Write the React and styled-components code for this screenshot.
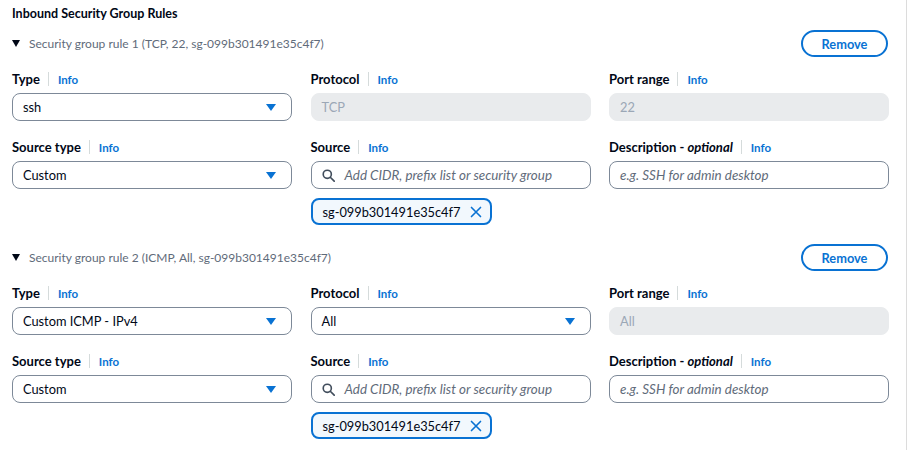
import React from "react";
import styled, { createGlobalStyle } from "styled-components";

const Global = createGlobalStyle`
  html, body { margin: 0; padding: 0; background: #fff; }
  body { font-family: Lato, "Open Sans", sans-serif; color: #000716; }
  * { box-sizing: border-box; }
`;

const Page = styled.div`
  width: 910px;
  height: 450px;
  overflow: hidden;
  display: flex;
`;

const Content = styled.div`
  flex: 1;
  padding: 4px 0 0 12px;
  width: 906px;
`;

const Edge = styled.div`
  width: 1px;
  background: #dcdcdc;
  margin-right: 3px;
`;

const Title = styled.h2`
  margin: 0;
  font-size: 12.5px;
  font-weight: 700;
  line-height: 20px;
  height: 20px;
`;

const Rule = styled.section`
  width: 877px;
  padding-top: ${(p) => p.$top}px;
`;

const RuleHeader = styled.div`
  display: flex;
  align-items: center;
  justify-content: space-between;
  height: 27px;
`;

const Toggle = styled.div`
  display: flex;
  align-items: center;
  gap: 9px;
  font-size: 12px;
  color: #5f6b7a;
`;

const Caret = styled.span`
  width: 0;
  height: 0;
  border-left: 4.5px solid transparent;
  border-right: 4.5px solid transparent;
  border-top: 7px solid #000716;
`;

const RemoveButton = styled.button`
  width: 87px;
  height: 27px;
  border: 2px solid #0972d3;
  border-radius: 14px;
  background: #fff;
  color: #0972d3;
  font-family: inherit;
  font-weight: 700;
  font-size: 12.8px;
  padding: 0;
  margin-right: 1px;
`;

const Grid = styled.div`
  display: grid;
  grid-template-columns: 280px 280px 280px;
  column-gap: 18.5px;
  row-gap: 16px;
  margin-top: 12px;
`;

const Field = styled.div`
  display: flex;
  flex-direction: column;
  gap: 4px;
`;

const LabelRow = styled.div`
  display: flex;
  align-items: center;
  height: 20px;
  font-size: 13px;
  font-weight: 700;
`;

const Optional = styled.i`
  font-weight: 700;
`;

const Sep = styled.span`
  width: 1px;
  height: 14px;
  background: #d5dbdb;
  margin: 0 9px 0 8px;
`;

const Info = styled.span`
  color: #0972d3;
  font-size: 11.5px;
  font-weight: 700;
`;

const Box = styled.div`
  height: 28px;
  border-radius: 8px;
  display: flex;
  align-items: center;
  font-size: 12.8px;
  padding: 0 10px;
  ${(p) =>
    p.$disabled
      ? `background: #e9ebed; color: #9ba7b6; border: 1px solid #e9ebed;`
      : `background: #fff; border: 1px solid #7d8998; color: #000716;`}
`;

const BoxText = styled.span`
  flex: 1;
  ${(p) => p.$placeholder && `color: #5f6b7a; font-style: italic; font-size: 13.4px;`}
`;

const Arrow = styled.span`
  width: 0;
  height: 0;
  border-left: 5px solid transparent;
  border-right: 5px solid transparent;
  border-top: 7px solid #0972d3;
  margin-right: 5px;
`;

const SearchIcon = styled.svg`
  width: 13px;
  height: 13px;
  margin-right: 10px;
  flex: none;
`;

const Token = styled.div`
  display: inline-flex;
  align-items: center;
  gap: 8px;
  height: 27px;
  width: 181px;
  margin-top: 5px;
  padding: 0 8px 0 10px;
  border: 2px solid #0972d3;
  border-radius: 8px;
  background: #f2f8fd;
  font-size: 12.8px;
  color: #000716;
`;

const Close = styled.svg`
  width: 12px;
  height: 12px;
  flex: none;
`;

const Label = ({ children }) => (
  <LabelRow>
    {children}
    <Sep />
    <Info>Info</Info>
  </LabelRow>
);

const Select = ({ value }) => (
  <Box>
    <BoxText>{value}</BoxText>
    <Arrow />
  </Box>
);

const Search = () => (
  <Box>
    <SearchIcon viewBox="0 0 16 16" fill="none" stroke="#414d5c" strokeWidth="2">
      <circle cx="6.5" cy="6.5" r="5" />
      <path d="M10.2 10.2 15 15" strokeLinecap="round" />
    </SearchIcon>
    <BoxText $placeholder>Add CIDR, prefix list or security group</BoxText>
  </Box>
);

const SgToken = () => (
  <div>
    <Token>
      <BoxText>sg-099b301491e35c4f7</BoxText>
      <Close viewBox="0 0 16 16" fill="none" stroke="#0972d3" strokeWidth="2.2" strokeLinecap="round">
        <path d="M2 2l12 12M14 2 2 14" />
      </Close>
    </Token>
  </div>
);

const RuleBlock = ({ n, summary, type, protocol, protocolSelect, port, top }) => (
  <Rule $top={top}>
    <RuleHeader>
      <Toggle>
        <Caret />
        Security group rule {n} ({summary})
      </Toggle>
      <RemoveButton>Remove</RemoveButton>
    </RuleHeader>
    <Grid>
      <Field>
        <Label>Type</Label>
        <Select value={type} />
      </Field>
      <Field>
        <Label>Protocol</Label>
        {protocolSelect ? (
          <Select value={protocol} />
        ) : (
          <Box $disabled>
            <BoxText>{protocol}</BoxText>
          </Box>
        )}
      </Field>
      <Field>
        <Label>Port range</Label>
        <Box $disabled>
          <BoxText>{port}</BoxText>
        </Box>
      </Field>
      <Field>
        <Label>Source type</Label>
        <Select value="Custom" />
      </Field>
      <Field>
        <Label>Source</Label>
        <Search />
        <SgToken />
      </Field>
      <Field>
        <Label>
          Description -&nbsp;<Optional>optional</Optional>
        </Label>
        <Box>
          <BoxText $placeholder>e.g. SSH for admin desktop</BoxText>
        </Box>
      </Field>
    </Grid>
  </Rule>
);

export default function App() {
  return (
    <Page>
      <Global />
      <Content>
        <Title>Inbound Security Group Rules</Title>
        <RuleBlock
          top={6}
          n={1}
          summary="TCP, 22, sg-099b301491e35c4f7"
          type="ssh"
          protocol="TCP"
          port="22"
        />
        <RuleBlock
          top={19}
          n={2}
          summary="ICMP, All, sg-099b301491e35c4f7"
          type="Custom ICMP - IPv4"
          protocol="All"
          protocolSelect
          port="All"
        />
      </Content>
      <Edge />
    </Page>
  );
}
